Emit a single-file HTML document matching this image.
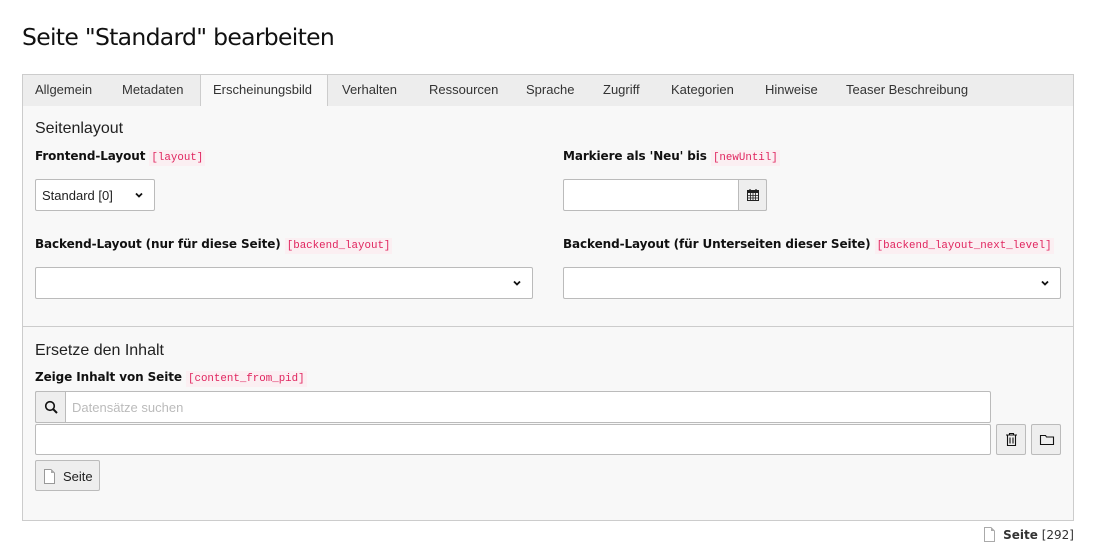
<!DOCTYPE html>
<html><head><meta charset="utf-8"><style>
*{box-sizing:border-box;margin:0;padding:0}
body{width:1098px;height:556px;background:#fff;font-family:"Liberation Sans",sans-serif;color:#212121;position:relative;overflow:hidden;font-size:13px}
.a{position:absolute}
h1{position:absolute;left:22px;top:23px;font-size:23.5px;font-weight:normal;color:#111;font-family:"DejaVu Sans",sans-serif;letter-spacing:-0.7px}
.tabs{left:22px;top:74px;width:1052px;height:33px;background:#ededed;border:1px solid #ccc}
.tab{position:absolute;top:82px;font-size:13px;color:#333}
.active{left:200px;top:74px;width:128px;height:34px;background:#f8f8f8;border:1px solid #ccc;border-bottom:none}
.panel{left:22px;top:106px;width:1052px;height:415px;background:#f8f8f8;border:1px solid #ccc;border-top:none}
.h{font-size:16px;color:#222}
.lbl{font-size:12px;font-weight:bold;color:#111;font-family:"DejaVu Sans",sans-serif;letter-spacing:-0.1px}
code{font-family:"Liberation Mono",monospace;font-size:10.8px;color:#e0245e;background:#fbeff2;padding:2px 2px;font-weight:normal;letter-spacing:0}
.box{background:#fff;border:1px solid #bbb;border-radius:2px}
.btn{background:#eee;border:1px solid #bbb;border-radius:2px}
.chev{position:absolute;right:10px;top:10px}
</style></head><body>
<h1>Seite "Standard" bearbeiten</h1>
<div class="a tabs"></div>
<div class="a active"></div>
<span class="tab" style="left:35px">Allgemein</span>
<span class="tab" style="left:122px">Metadaten</span>
<span class="tab" style="left:213px">Erscheinungsbild</span>
<span class="tab" style="left:342px">Verhalten</span>
<span class="tab" style="left:429px">Ressourcen</span>
<span class="tab" style="left:526px">Sprache</span>
<span class="tab" style="left:603px">Zugriff</span>
<span class="tab" style="left:671px">Kategorien</span>
<span class="tab" style="left:765px">Hinweise</span>
<span class="tab" style="left:846px">Teaser Beschreibung</span>
<div class="a panel"></div>
<div class="a" style="left:22px;top:326px;width:1052px;height:1px;background:#ccc"></div>

<div class="a h" style="left:35px;top:120px">Seitenlayout</div>
<div class="a lbl" style="left:35px;top:149px">Frontend-Layout <code>[layout]</code></div>
<div class="a lbl" style="left:563px;top:149px">Markiere als 'Neu' bis <code>[newUntil]</code></div>
<div class="a box" style="left:35px;top:179px;width:120px;height:32px"><span class="a" style="left:6px;top:8px">Standard [0]</span>
<svg class="chev" width="10" height="10" viewBox="0 0 10 10"><path d="M2 3.5L5 6.5L8 3.5" stroke="#111" stroke-width="1.8" fill="none"/></svg></div>
<div class="a box" style="left:563px;top:179px;width:204px;height:32px"></div>
<div class="a btn" style="left:738px;top:179px;width:29px;height:32px;border-radius:0 2px 2px 0">
<svg class="a" style="left:7px;top:8px" width="14" height="14" viewBox="0 0 14 14"><rect x="1.5" y="2.5" width="11" height="10" fill="none" stroke="#222"/><rect x="1.5" y="2.5" width="11" height="2.5" fill="#222"/><path d="M1.5 7.5h11M1.5 10h11M4.5 5v7.5M7 5v7.5M9.5 5v7.5" stroke="#222" stroke-width=".8"/><path d="M4 1v3M10 1v3" stroke="#222" stroke-width="1.2"/></svg></div>

<div class="a lbl" style="left:35px;top:237px">Backend-Layout (nur für diese Seite) <code>[backend_layout]</code></div>
<div class="a lbl" style="left:563px;top:237px">Backend-Layout (für Unterseiten dieser Seite) <code>[backend_layout_next_level]</code></div>
<div class="a box" style="left:35px;top:267px;width:498px;height:32px"><svg class="chev" width="10" height="10" viewBox="0 0 10 10"><path d="M2 3.5L5 6.5L8 3.5" stroke="#111" stroke-width="1.8" fill="none"/></svg></div>
<div class="a box" style="left:563px;top:267px;width:498px;height:32px"><svg class="chev" width="10" height="10" viewBox="0 0 10 10"><path d="M2 3.5L5 6.5L8 3.5" stroke="#111" stroke-width="1.8" fill="none"/></svg></div>

<div class="a h" style="left:35px;top:342px">Ersetze den Inhalt</div>
<div class="a lbl" style="left:35px;top:370px">Zeige Inhalt von Seite <code>[content_from_pid]</code></div>
<div class="a box" style="left:35px;top:391px;width:956px;height:32px"></div>
<div class="a btn" style="left:35px;top:391px;width:31px;height:32px;border-radius:2px 0 0 2px">
<svg class="a" style="left:8px;top:8px" width="15" height="15" viewBox="0 0 15 15"><circle cx="6" cy="6" r="4.3" fill="none" stroke="#111" stroke-width="1.6"/><path d="M9.2 9.2L13 13" stroke="#111" stroke-width="2"/></svg></div>
<span class="a" style="left:72px;top:400px;color:#bbb">Datensätze suchen</span>
<div class="a box" style="left:35px;top:424px;width:956px;height:31px"></div>
<div class="a btn" style="left:996px;top:424px;width:30px;height:31px">
<svg class="a" style="left:8px;top:7px" width="13" height="15" viewBox="0 0 13 15"><path d="M1 3h11M4.5 3V1.5h4V3M2.5 3v10.5h8V3M5 5.5v6M8 5.5v6" stroke="#111" stroke-width="1.1" fill="none"/></svg></div>
<div class="a btn" style="left:1031px;top:424px;width:30px;height:31px">
<svg class="a" style="left:7px;top:9px" width="16" height="12" viewBox="0 0 16 12"><path d="M1.5 1.5h5l1 1.5h7v7.5h-13z" fill="none" stroke="#111" stroke-width="1.1"/></svg></div>
<div class="a btn" style="left:35px;top:460px;width:65px;height:31px">
<svg class="a" style="left:8px;top:8px" width="11" height="15" viewBox="0 0 11 15"><path d="M.5 .5h6.5l3.5 3.5v10.5h-10z" fill="#fff" stroke="#999"/><path d="M7 .5v3.5h3.5z" fill="#aaa"/></svg>
<span class="a" style="left:27px;top:8px">Seite</span></div>

<svg class="a" style="left:984px;top:527px" width="11" height="15" viewBox="0 0 11 15"><path d="M.5 .5h6.5l3.5 3.5v10.5h-10z" fill="#fff" stroke="#aaa"/><path d="M7 .5v3.5h3.5z" fill="#aaa"/></svg>
<span class="a" style="right:24px;top:528px;color:#333;font-family:'DejaVu Sans',sans-serif;font-size:12px"><b>Seite</b> [292]</span>
</body></html>
